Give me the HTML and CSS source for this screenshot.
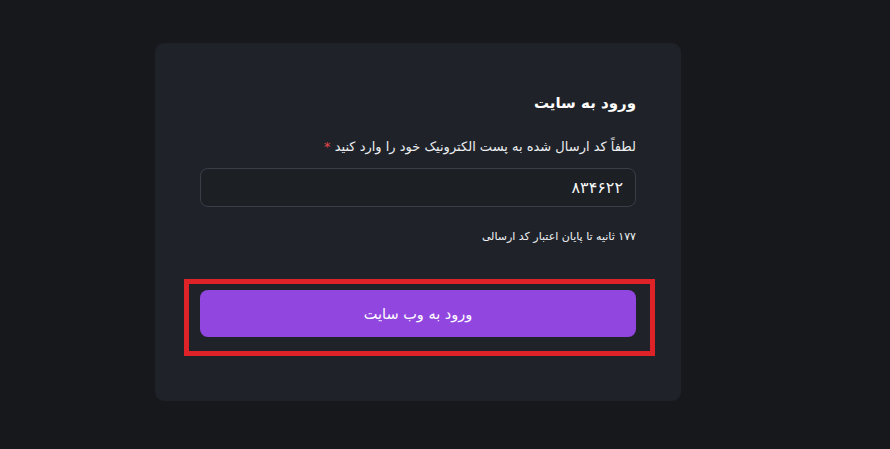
FILE: index.html
```html
<!DOCTYPE html>
<html lang="fa" dir="rtl">
<head>
<meta charset="utf-8">
<title>ورود به سایت</title>
<link rel="stylesheet" href="styles.css">
</head>
<body>
<main class="page">
  <section class="card">
    <h1 class="title">ورود به سایت</h1>
    <label class="label" for="code">لطفاً کد ارسال شده به پست الکترونیک خود را وارد کنید <span class="req">*</span></label>
    <div class="input"><span id="code">۸۳۴۶۲۲</span></div>
    <p class="timer">۱۷۷ ثانیه تا پایان اعتبار کد ارسالی</p>
    <div class="action">
      <button class="btn" type="button">ورود به وب سایت</button>
      <div class="highlight"></div>
    </div>
  </section>
</main>
</body>
</html>
```
FILE: styles.css
```css
html, body {
  margin: 0;
  padding: 0;
}
body {
  background: #16181b;
  color: #f2f3f5;
  font-family: "DejaVu Sans", "Noto Sans", sans-serif;
  width: 890px;
  height: 449px;
  overflow: hidden;
}
.page {
  display: flex;
  justify-content: center;
  padding-top: 43px;
  padding-right: 54px;
}
.card {
  width: 526px;
  height: 358px;
  box-sizing: border-box;
  background: #1f2329;
  border-radius: 9px;
  padding: 45px 45px 0;
  display: flex;
  flex-direction: column;
}
.title {
  margin: 0;
  font-size: 15px;
  font-weight: 700;
  line-height: 30px;
  color: #ffffff;
}
.label {
  margin-top: 19px;
  font-size: 13px;
  line-height: 20px;
  color: #eceef1;
}
.req {
  color: #e5484d;
}
.input {
  margin-top: 11px;
  height: 39px;
  box-sizing: border-box;
  border: 1px solid #3a3f47;
  border-radius: 8px;
  background: #1c1f24;
  padding: 0 12px;
  display: flex;
  align-items: center;
  font-size: 16px;
  font-weight: 400;
  color: #f5f6f7;
}
.timer {
  margin: 20px 0 0;
  font-size: 11px;
  font-weight: 400;
  line-height: 20px;
  color: #f2f3f5;
}
.action {
  position: relative;
  margin-top: 43px;
}
.btn {
  width: 100%;
  height: 47px;
  border: none;
  border-radius: 8px;
  background: #9146e0;
  color: #ffffff;
  font-family: inherit;
  font-size: 14.5px;
  font-weight: 400;
  cursor: pointer;
}
.highlight {
  position: absolute;
  left: -16px;
  right: -19px;
  top: -11px;
  bottom: -19px;
  border: 5px solid #dd2228;
  pointer-events: none;
}
```
